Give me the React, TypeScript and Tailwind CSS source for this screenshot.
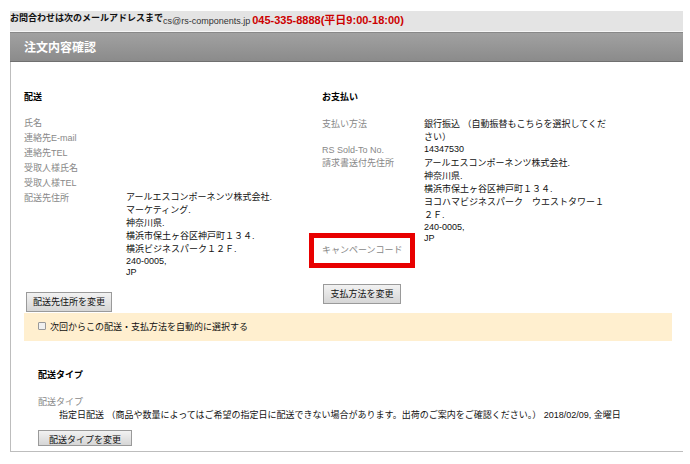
import React, { useState } from 'react';

interface DetailRow {
  label: string;
  lines?: string[];
  highlighted?: boolean;
}

const deliveryRows: DetailRow[] = [
  { label: '氏名' },
  { label: '連絡先E-mail' },
  { label: '連絡先TEL' },
  { label: '受取人様氏名' },
  { label: '受取人様TEL' },
  {
    label: '配送先住所',
    lines: [
      'アールエスコンポーネンツ株式会社.',
      'マーケティング.',
      '神奈川県.',
      '横浜市保土ヶ谷区神戸町１３４.',
      '横浜ビジネスパーク１２Ｆ.',
      '240-0005,',
      'JP',
    ],
  },
];

const paymentRows: DetailRow[] = [
  { label: '支払い方法', lines: ['銀行振込 （自動振替もこちらを選択してください）'] },
  { label: 'RS Sold-To No.', lines: ['14347530'] },
  {
    label: '請求書送付先住所',
    lines: [
      'アールエスコンポーネンツ株式会社.',
      '神奈川県.',
      '横浜市保土ヶ谷区神戸町１３４.',
      'ヨコハマビジネスパーク　ウエストタワー１２Ｆ.',
      '240-0005,',
      'JP',
    ],
  },
  { label: 'キャンペーンコード', highlighted: true },
];

// lines without Japanese text are set a little tighter
const isLatin = (line: string) => /^[\x20-\x7e]+$/.test(line);

const Value: React.FC<{ lines?: string[] }> = ({ lines = [] }) => (
  <dd className="w-[185px] text-[#111]">
    {lines.map((line) => (
      <div key={line} className={isLatin(line) ? 'leading-[11px]' : 'leading-[13px]'}>
        {line}
      </div>
    ))}
  </dd>
);

const Button: React.FC<{ children: React.ReactNode; className: string }> = ({ children, className }) => (
  <button
    type="button"
    className={`block border border-[#9a9a9a] bg-linear-to-b from-[#f2f2f2] to-[#d6d6d6] text-center text-[#111] cursor-pointer ${className}`}
  >
    {children}
  </button>
);

const App: React.FC = () => {
  const [remember, setRemember] = useState(false);

  return (
    <div className="bg-white pt-[11px] pr-[7px] pl-[10px] text-[9px] leading-[13px] text-[#111] font-['Liberation_Sans','Noto_Sans_CJK_JP',sans-serif]">
      <div className="flex h-[21px] items-start border-b border-[#f6f6f6] bg-[#e4e4e4] whitespace-nowrap">
        <strong className="leading-[14px]">お問合わせは次のメールアドレスまで</strong>
        <a href="mailto:cs@rs-components.jp" className="leading-[20px] text-[#333]">
          cs@rs-components.jp
        </a>
        <strong className="ml-[2px] text-[11px] leading-[18px] text-[#cc0000]">045-335-8888(平日9:00-18:00)</strong>
      </div>

      <h1 className="h-[30px] border-t border-b border-t-[#888] border-b-[#707070] bg-linear-to-b from-[#a1a1a1] to-[#8b8b8b] pl-[14px] text-[12px] leading-[30px] font-bold text-white">
        注文内容確認
      </h1>

      <main className="border-b border-l border-[#bdbdbd] pr-[11px] pb-[5px] pl-[13px]">
        <div className="grid grid-cols-[298px_1fr] pt-7">
          <section>
            <h2 className="leading-[14px] font-bold text-black">配送</h2>
            <dl className="mt-3">
              {deliveryRows.map((row) => (
                <div key={row.label} className="grid grid-cols-[102px_1fr]">
                  <dt className="leading-[15px] text-[#888]">{row.label}</dt>
                  <Value lines={row.lines} />
                </div>
              ))}
            </dl>
            <Button className="mt-[14px] ml-[2px] h-5 w-[86px]">配送先住所を変更</Button>
          </section>

          <section>
            <h2 className="leading-[14px] font-bold text-black">お支払い</h2>
            <dl className="mt-[14px]">
              {paymentRows.map((row) => (
                <div key={row.label} className="grid grid-cols-[102px_1fr]">
                  <dt className={row.highlighted ? 'relative text-[#888]' : 'text-[#888]'}>
                    {row.label}
                    {row.highlighted && (
                      <span className="absolute -top-[11px] -left-[13px] h-[35px] w-[106px] border-[5px] border-[#e80000]" />
                    )}
                  </dt>
                  <Value lines={row.lines} />
                </div>
              ))}
            </dl>
            <Button className="mt-[27px] ml-px h-5 w-[78px]">支払方法を変更</Button>
          </section>
        </div>

        <label className="mt-px flex h-7 items-center bg-[#ffefcf] pl-[14px]">
          <input
            type="checkbox"
            checked={remember}
            onChange={(e) => setRemember(e.target.checked)}
            className="mr-1 mb-[2px] size-2 appearance-none rounded-[1px] border border-[#999] bg-[#f0f0f0] checked:bg-[#666]"
          />
          次回からこの配送・支払方法を自動的に選択する
        </label>

        <section className="mt-[27px] pl-[14px]">
          <h2 className="leading-[14px] font-bold text-black">配送タイプ</h2>
          <dl className="mt-[14px]">
            <dt className="text-[#888]">配送タイプ</dt>
            <dd className="pl-[21px]">
              指定日配送 （商品や数量によってはご希望の指定日に配送できない場合があります。出荷のご案内をご確認ください。） 2018/02/09, 金曜日
            </dd>
          </dl>
          <Button className="mt-2 h-4 w-[94px] pt-1 leading-[11px]">配送タイプを変更</Button>
        </section>
      </main>
    </div>
  );
};

export default App;
